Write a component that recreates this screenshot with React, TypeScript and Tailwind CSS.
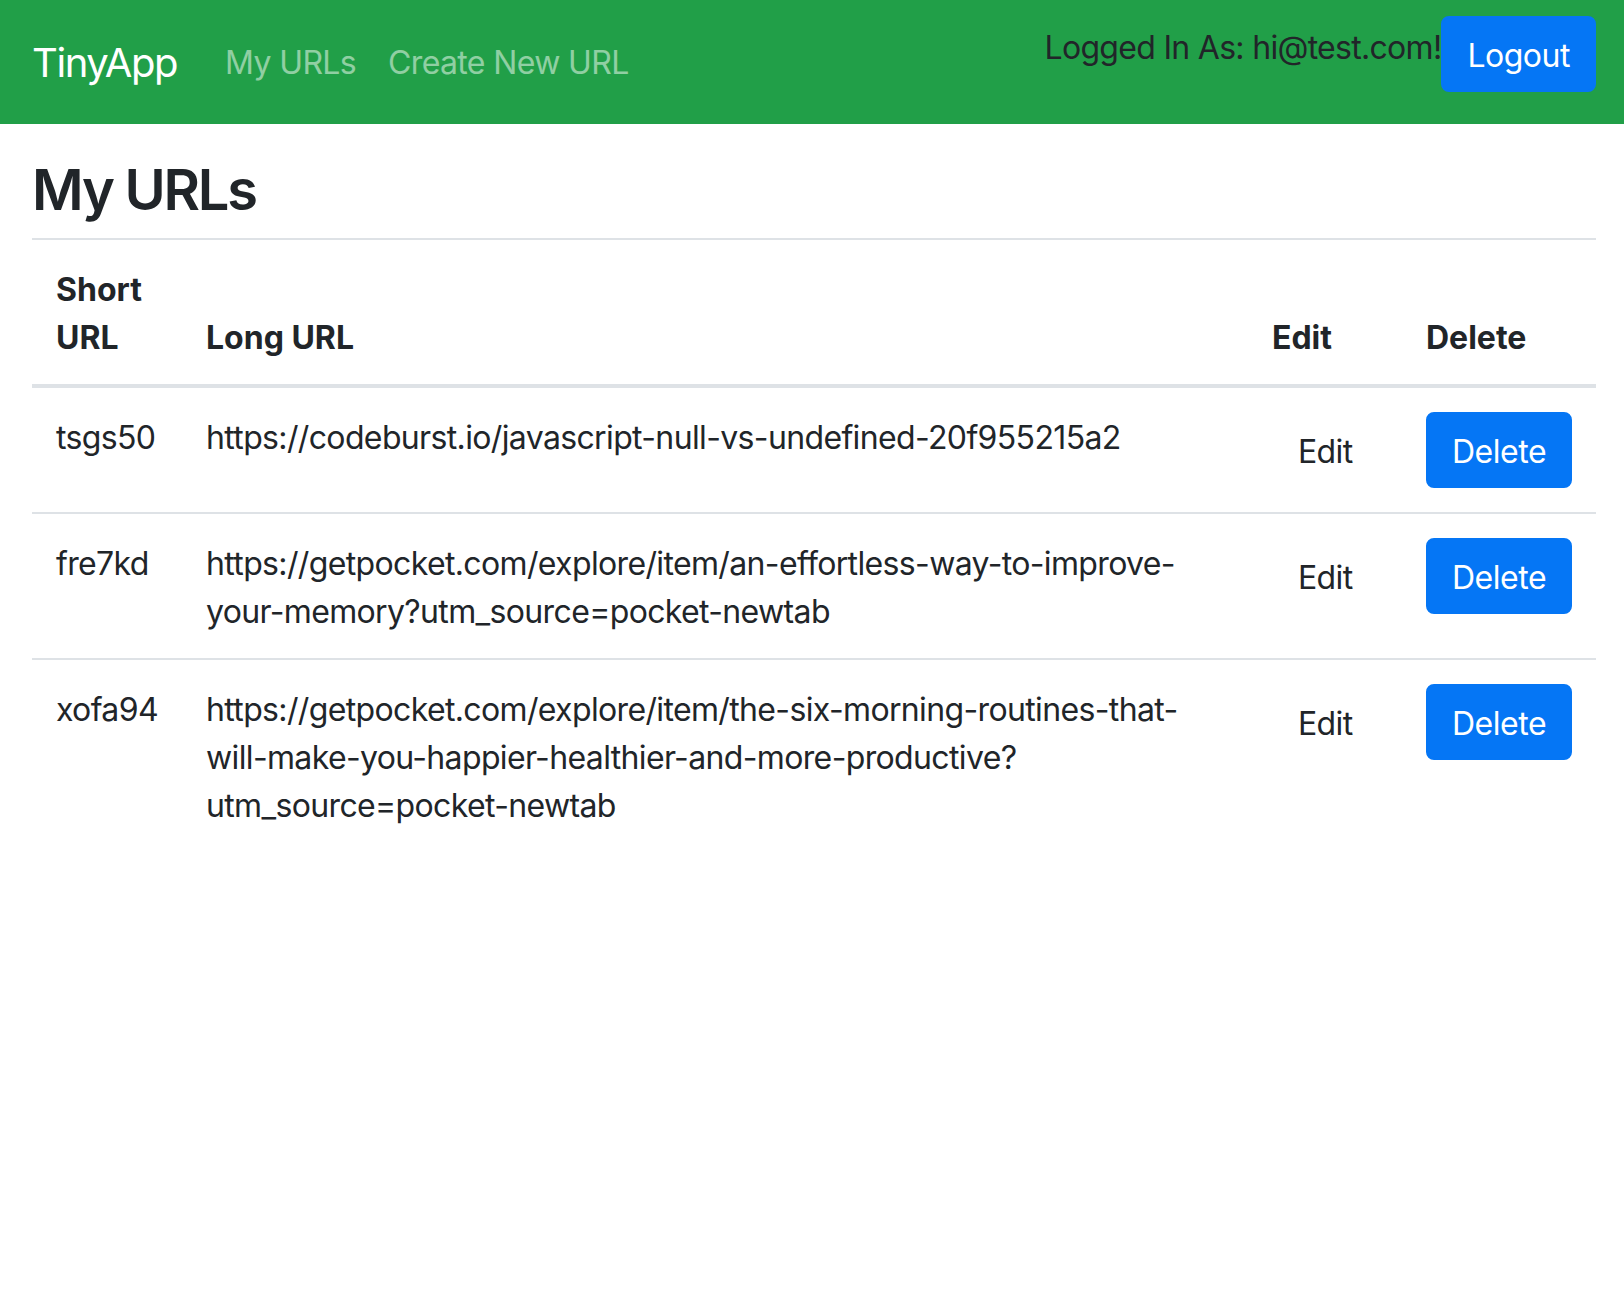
import React from "react";

const rows = [
  { short: "tsgs50", lines: ["https://codeburst.io/javascript-null-vs-undefined-20f955215a2"] },
  {
    short: "fre7kd",
    lines: [
      "https://getpocket.com/explore/item/an-effortless-way-to-improve-",
      "your-memory?utm_source=pocket-newtab",
    ],
  },
  {
    short: "xofa94",
    lines: [
      "https://getpocket.com/explore/item/the-six-morning-routines-that-",
      "will-make-you-happier-healthier-and-more-productive?",
      "utm_source=pocket-newtab",
    ],
  },
];

const cols = "grid grid-cols-[150px_1066px_154px_194px]";
const cell = "px-[24px] pt-[26px] pb-[22px]";
const btnPad = "px-[24px] pt-[14px] pb-[10px]";

export default function App() {
  return (
    <div className="min-h-[1304px] bg-white text-[#212529] font-['Inter',sans-serif]">
      <nav className="flex items-center justify-between bg-[#219f48] py-[16px] pl-[32px] pr-[28px]">
        <div className="flex items-center">
          <a className="mr-[32px] pt-[11px] pb-[9px] text-[40px] leading-[60px] tracking-[-0.035em] text-white">TinyApp</a>
          <a className="px-[16px] pt-[17px] pb-[15px] text-[32px] leading-[48px] tracking-[-0.02em] text-white/50">My URLs</a>
          <a className="px-[16px] pt-[17px] pb-[15px] text-[32px] leading-[48px] tracking-[-0.02em] text-white/50">Create New URL</a>
        </div>
        <div className="mb-[16px] flex items-start">
          <span className="mt-[8px] text-[32px] leading-[48px] tracking-[-0.022em] text-[#212529]">Logged In As: hi@test.com!</span>
          <button className={`rounded-[8px] border-2 border-[#0576f5] bg-[#0576f5] ${btnPad} text-[32px] leading-[48px] tracking-[-0.015em] text-white`}>
            Logout
          </button>
        </div>
      </nav>
      <main className="pl-[32px] pr-[28px] pt-[33px]">
        <h3 className="mb-[14px] text-[56px] font-semibold leading-[67px] tracking-[-0.04em]">My URLs</h3>
        <div className="text-[32px] leading-[48px]">
          <div className={`${cols} items-end border-t-2 border-b-4 border-[#dee2e6] font-bold`}>
            <div className={cell}>Short URL</div>
            <div className={cell}>Long URL</div>
            <div className={cell}>Edit</div>
            <div className={cell}>Delete</div>
          </div>
          {rows.map((r, i) => (
            <div
              key={r.short}
              className={`${cols} items-start tracking-[-0.02em] ${i > 0 ? "border-t-2 border-[#dee2e6]" : ""}`}
            >
              <div className={cell}>{r.short}</div>
              <div className={cell}>
                {r.lines.map((l) => (
                  <div key={l} className="whitespace-nowrap">{l}</div>
                ))}
              </div>
              <div className="p-[24px]">
                <button className={`border-2 border-transparent ${btnPad} text-[32px] leading-[48px] tracking-[-0.02em] text-[#212529]`}>
                  Edit
                </button>
              </div>
              <div className="p-[24px]">
                <button className={`rounded-[8px] border-2 border-[#0576f5] bg-[#0576f5] ${btnPad} text-[32px] leading-[48px] tracking-[-0.015em] text-white`}>
                  Delete
                </button>
              </div>
            </div>
          ))}
        </div>
      </main>
    </div>
  );
}
